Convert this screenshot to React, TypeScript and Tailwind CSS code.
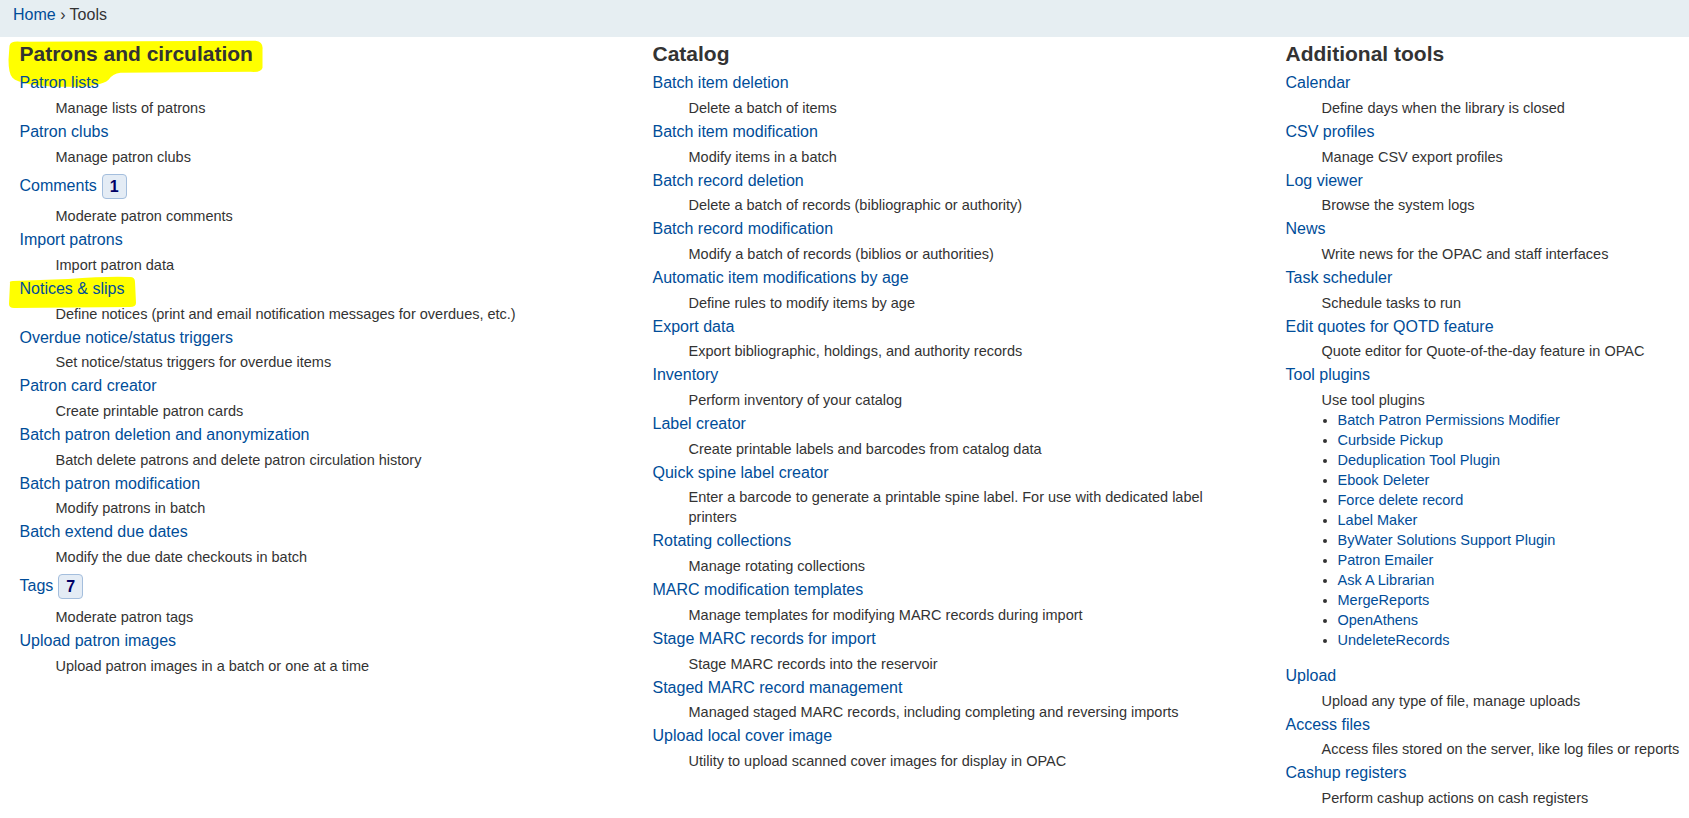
type Tool = { title: string; desc: string; badge?: string; mark?: boolean; plugins?: string[] };

const patrons: Tool[] = [
  { title: 'Patron lists', desc: 'Manage lists of patrons' },
  { title: 'Patron clubs', desc: 'Manage patron clubs' },
  { title: 'Comments', desc: 'Moderate patron comments', badge: '1' },
  { title: 'Import patrons', desc: 'Import patron data' },
  { title: 'Notices & slips', desc: 'Define notices (print and email notification messages for overdues, etc.)', mark: true },
  { title: 'Overdue notice/status triggers', desc: 'Set notice/status triggers for overdue items' },
  { title: 'Patron card creator', desc: 'Create printable patron cards' },
  { title: 'Batch patron deletion and anonymization', desc: 'Batch delete patrons and delete patron circulation history' },
  { title: 'Batch patron modification', desc: 'Modify patrons in batch' },
  { title: 'Batch extend due dates', desc: 'Modify the due date checkouts in batch' },
  { title: 'Tags', desc: 'Moderate patron tags', badge: '7' },
  { title: 'Upload patron images', desc: 'Upload patron images in a batch or one at a time' },
];

const catalog: Tool[] = [
  { title: 'Batch item deletion', desc: 'Delete a batch of items' },
  { title: 'Batch item modification', desc: 'Modify items in a batch' },
  { title: 'Batch record deletion', desc: 'Delete a batch of records (bibliographic or authority)' },
  { title: 'Batch record modification', desc: 'Modify a batch of records (biblios or authorities)' },
  { title: 'Automatic item modifications by age', desc: 'Define rules to modify items by age' },
  { title: 'Export data', desc: 'Export bibliographic, holdings, and authority records' },
  { title: 'Inventory', desc: 'Perform inventory of your catalog' },
  { title: 'Label creator', desc: 'Create printable labels and barcodes from catalog data' },
  { title: 'Quick spine label creator', desc: 'Enter a barcode to generate a printable spine label. For use with dedicated label printers' },
  { title: 'Rotating collections', desc: 'Manage rotating collections' },
  { title: 'MARC modification templates', desc: 'Manage templates for modifying MARC records during import' },
  { title: 'Stage MARC records for import', desc: 'Stage MARC records into the reservoir' },
  { title: 'Staged MARC record management', desc: 'Managed staged MARC records, including completing and reversing imports' },
  { title: 'Upload local cover image', desc: 'Utility to upload scanned cover images for display in OPAC' },
];

const additional: Tool[] = [
  { title: 'Calendar', desc: 'Define days when the library is closed' },
  { title: 'CSV profiles', desc: 'Manage CSV export profiles' },
  { title: 'Log viewer', desc: 'Browse the system logs' },
  { title: 'News', desc: 'Write news for the OPAC and staff interfaces' },
  { title: 'Task scheduler', desc: 'Schedule tasks to run' },
  { title: 'Edit quotes for QOTD feature', desc: 'Quote editor for Quote-of-the-day feature in OPAC' },
  {
    title: 'Tool plugins',
    desc: 'Use tool plugins',
    plugins: [
      'Batch Patron Permissions Modifier',
      'Curbside Pickup',
      'Deduplication Tool Plugin',
      'Ebook Deleter',
      'Force delete record',
      'Label Maker',
      'ByWater Solutions Support Plugin',
      'Patron Emailer',
      'Ask A Librarian',
      'MergeReports',
      'OpenAthens',
      'UndeleteRecords',
    ],
  },
  { title: 'Upload', desc: 'Upload any type of file, manage uploads' },
  { title: 'Access files', desc: 'Access files stored on the server, like log files or reports' },
  { title: 'Cashup registers', desc: 'Perform cashup actions on cash registers' },
];

function Entry({ tool, nowrap }: { tool: Tool; nowrap?: boolean }) {
  return (
    <>
      <dt className="relative text-[16px] leading-[24px] text-[#004d99]">
        {/* marker highlight behind the link */}
        {tool.mark && (
          <svg className="absolute -z-10 left-[-12px] top-[-1px] overflow-visible" width="130" height="34">
            <path d="M2 7 Q1 5 5 5 L60 3 Q100 0 122 1 Q127 1 127 6 L128 27 Q128 31 122 31 L6 32 Q1 32 1 28 Z" fill="#ffff00" />
          </svg>
        )}
        <a href="#">{tool.title}</a>
        {tool.badge && (
          <span className="ml-[5px] my-[5px] inline-block align-middle h-[25px] rounded-[4px] border border-[#a4bedd] bg-[#e4ecf5] px-[7px] text-[16px] leading-[23px] font-bold text-[#000066]">
            {tool.badge}
          </span>
        )}
      </dt>
      <dd className={`pl-[36px] pt-[2.7px] pb-[2px] text-[14.5px] leading-[20px] text-[#333] ${nowrap ? 'whitespace-nowrap' : ''}`}>
        {tool.desc}
        {tool.plugins && (
          <ul className="list-disc pl-[16px] mb-[12px]">
            {tool.plugins.map(p => (
              <li key={p} className="leading-[20px]">
                <a href="#" className="text-[#004d99]">{p}</a>
              </li>
            ))}
          </ul>
        )}
      </dd>
    </>
  );
}

function Column({ title, tools, mark, nowrap }: { title: string; tools: Tool[]; mark?: boolean; nowrap?: boolean }) {
  return (
    <div className="pr-[40px] min-w-0">
      <h3 className="relative mb-[6px] text-[21px] leading-[23px] font-bold text-[#333]">
        {mark && (
          <svg className="absolute -z-10 left-[-12px] top-[-2px] overflow-visible" width="260" height="50">
            <path
              d="M1.5 5.75 Q2.5 0.75 12.5 1.75 L247.5 0.75 Q255.5 1.75 254.5 9.75 L254.5 27.75 Q253.5 32.75 242.5 31.75 L112.5 32.75 Q104.5 33.75 100.5 39.75 Q92.5 47.75 52.5 46.75 Q12.5 45.75 4.5 37.75 Q0.5 33.75 0.5 19.75 Z"
              fill="#ffff00"
            />
          </svg>
        )}
        {title}
      </h3>
      <dl>
        {tools.map(t => (
          <Entry key={t.title} tool={t} nowrap={nowrap} />
        ))}
      </dl>
    </div>
  );
}

export default function App() {
  return (
    <div className="min-h-screen overflow-hidden bg-white font-['Liberation_Sans',Arial,sans-serif] text-[#333]">
      <nav className="h-[37px] bg-[#e6eef2] pl-[13px] pt-[2.5px] text-[16px] leading-[24px] text-[#333]">
        <a href="#" className="text-[#004d99]">Home</a> › Tools
      </nav>
      <main className="isolate grid grid-cols-[633px_633px_1fr] pl-[19.5px] pt-[5.25px]">
        <Column title="Patrons and circulation" tools={patrons} mark />
        <Column title="Catalog" tools={catalog} />
        <Column title="Additional tools" tools={additional} nowrap />
      </main>
    </div>
  );
}
